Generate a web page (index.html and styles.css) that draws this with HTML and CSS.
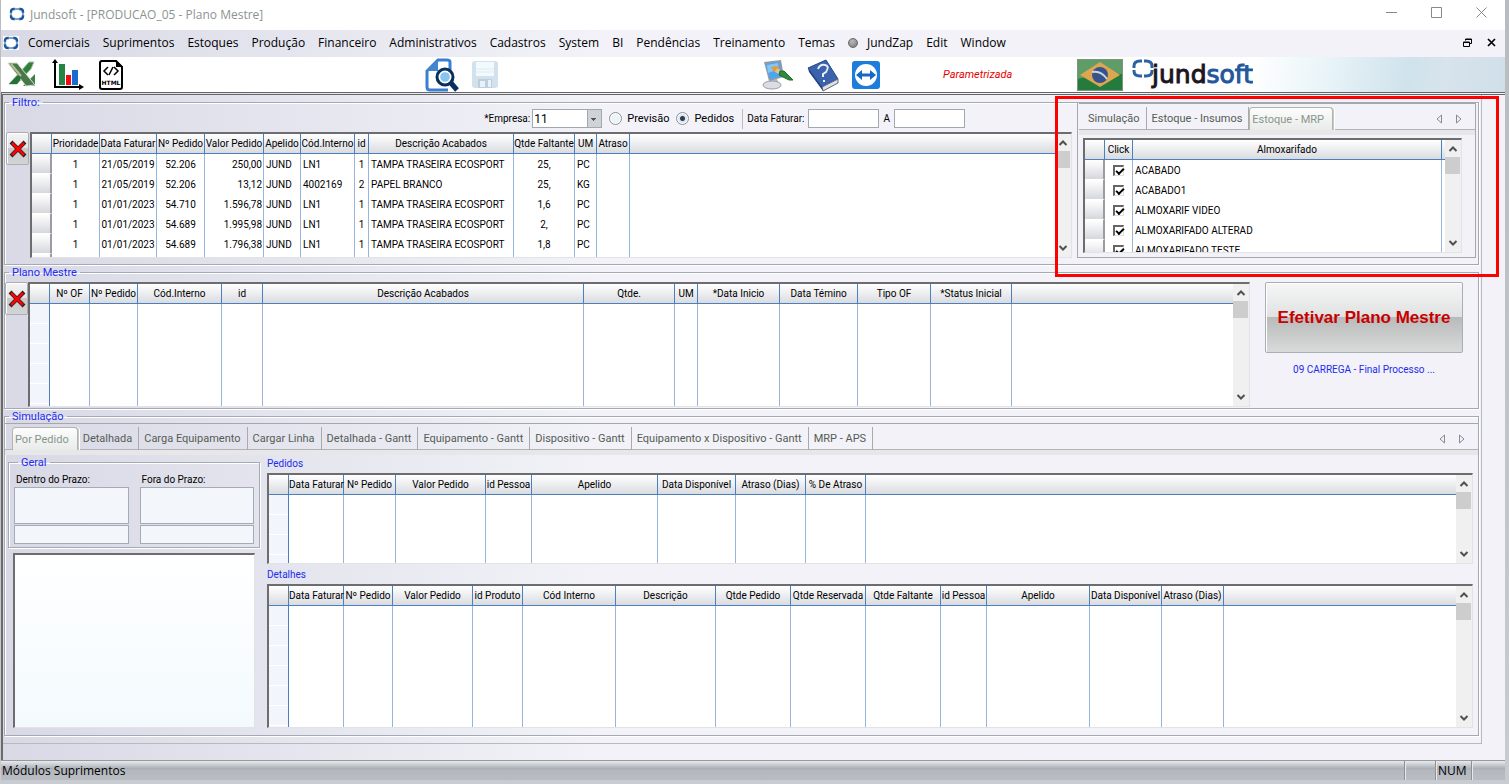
FILE: index.html
```html
<!DOCTYPE html>
<html lang="pt-BR">
<head>
<meta charset="utf-8">
<title>Jundsoft - [PRODUCAO_05 - Plano Mestre]</title>
<link rel="stylesheet" href="styles.css">
</head>
<body>
<svg class="defs" aria-hidden="true">
  <symbol id="ring" viewBox="0 0 16 14"><path d="M6 2H5Q2 2 2 5v1M10 2h1q3 0 3 3v1M2 8v1q0 3 3 3h1M14 8v1q0 3-3 3h-1" fill="none" stroke="#1d559c" stroke-width="2.4"/><path d="M5 2h6M5 12h6M2 5v4M14 5v4" stroke="#4d86c0" stroke-width="1.4"/></symbol>
  <symbol id="up" viewBox="0 0 10 8"><path d="M1.5 6 5 2.500 8.500 6" fill="none" stroke="#505050" stroke-width="2"/></symbol>
  <symbol id="down" viewBox="0 0 10 8"><path d="M1.500 2 5 5.500 8.500 2" fill="none" stroke="#505050" stroke-width="2"/></symbol>
  <symbol id="cross" viewBox="0 0 18 18"><path d="M2 2 16 16M16 2 2 16" stroke="#222" stroke-width="4"/><path d="M3 3 15 15M15 3 3 15" stroke="#f00" stroke-width="2.600"/></symbol>
  <symbol id="prev" viewBox="0 0 6 10"><path d="M5.500 1v8L1 5z" fill="none" stroke="#889"/></symbol>
  <symbol id="next" viewBox="0 0 6 10"><path d="M.5 1v8L5 5z" fill="none" stroke="#889"/></symbol>
</svg>
<div class="window">
  <header class="titlebar">
    <svg class="ring"><use href="#ring"/></svg>
    <h1>Jundsoft - [PRODUCAO_05 - Plano Mestre]</h1>
    <div class="caption-buttons">
      <button aria-label="Minimizar"><svg viewBox="0 0 11 11"><path d="M0 5.500h11" stroke="#888"/></svg></button>
      <button aria-label="Maximizar"><svg viewBox="0 0 11 11"><path d="M.5.5h10v10H.5z" fill="none" stroke="#888"/></svg></button>
      <button aria-label="Fechar"><svg viewBox="0 0 11 11"><path d="M.5.5l10 10M10.500.5l-10 10" stroke="#888"/></svg></button>
    </div>
  </header>
  <nav class="menubar">
    <svg class="ring"><use href="#ring"/></svg>
    <div class="menus">
      <button>Comerciais</button><button>Suprimentos</button><button>Estoques</button><button>Produção</button><button>Financeiro</button><button>Administrativos</button><button>Cadastros</button><button>System</button><button>BI</button><button>Pendências</button><button>Treinamento</button><button>Temas</button><button class="zap"><i></i>JundZap</button><button>Edit</button><button>Window</button>
    </div>
    <div class="mdi-buttons">
      <button aria-label="Restaurar"><svg viewBox="0 0 9 9"><path d="M2.500 2.500V1h6v4.500H7M.5 4h6v4.500h-6zM.5 4.500h6M2.500 1.500h6" fill="none" stroke="#000"/></svg></button>
      <button aria-label="Fechar janela"><svg viewBox="0 0 9 9"><path d="M1 1l7 7M8 1l-7 7" stroke="#000" stroke-width="1.700"/></svg></button>
    </div>
  </nav>
  <div class="toolbar">
    <div class="tools tools-export">
      <button aria-label="Exportar para Excel"><svg width="30" height="30" viewBox="0 0 30 30"><path d="M16 26 28 14v12z" fill="#3f8148"/><path d="M2 24 22 2h5l-3 7L10 24z" fill="#2f8138" stroke="#aebfae"/><path d="M1 3h9l18 22-9 1z" fill="#4a7749" stroke="#d6dfce"/><path d="m4 4 10 12" stroke="#b6bd97" stroke-width="2"/><path d="M2 24 10 24l4-6-3-3z" fill="#247135"/></svg></button>
      <button aria-label="Gráfico"><svg width="33" height="32" viewBox="0 0 33 32"><path fill="#258344" d="M8 5h6v21H8z"/><path fill="#f00a18" d="M15 16h5v10h-5z"/><path fill="#1b6bd0" d="M21 11h6v15h-6z"/><path d="M4 2v26h25" fill="none" stroke="#000" stroke-width="2"/><path d="m1 4 3-4 3 4zM28 25l5 3-5 3z"/></svg></button>
      <button aria-label="Exportar para HTML"><svg width="26" height="32" viewBox="0 0 26 32"><path d="M3 2h15l6 6v20q0 2-2 2H4q-2 0-2-2V4q0-2 2-2z" fill="#fff" stroke="#000" stroke-width="2"/><path d="M18 1v7h7z"/><path d="m10 8-4 4 4 4m6-8 4 4-4 4m-1-8-4 8" fill="none" stroke="#000" stroke-width="1.500"/><text x="13" y="26" text-anchor="middle" class="html-word">HTML</text></svg></button>
    </div>
    <div class="tools tools-file">
      <button aria-label="Visualizar"><svg width="34" height="34" viewBox="0 0 34 34"><path d="M25 12V4q0-2-3-2h-9L2 13v16q0 3 3 3h18" fill="none" stroke="#3b7fd0" stroke-width="3"/><path d="M13 1v12H2z" fill="#4287cf"/><path d="m26 25 6 7" stroke="#09305e" stroke-width="5"/><circle cx="20" cy="19" r="8" fill="#fff" stroke="#09305e" stroke-width="3"/><circle cx="20" cy="19" r="4.800" fill="#88c4ed"/></svg></button>
      <button aria-label="Salvar" disabled><svg width="28" height="30" viewBox="0 0 28 30"><rect x="1" y="1" width="26" height="27" rx="3" fill="#d3e1ec"/><path d="M5 2h18v14H5z" fill="#f3fafd"/><path d="M5 9h18M5 12h18" stroke="#dcebf4"/><path d="M7 19h14v9H7z" fill="#bccfdd"/><path d="M9 21h5v6H9zM17 20h3v7h-3z" fill="#e9f2f8"/></svg></button>
    </div>
    <div class="tools tools-help">
      <button aria-label="Personalizar"><svg width="32" height="32" viewBox="0 0 32 32"><path d="M8 20h7l2 5H7z" fill="#b9bcc6"/><ellipse cx="10" cy="26" rx="9" ry="4" fill="#dcdde4" stroke="#9a9ca4"/><path d="m2 3 17-2 3 17-15 4z" fill="#8d9bab"/><path d="m4 5 13-2 3 14-12 3z" fill="#4aa6ef"/><path d="m5 6 11-2 1 6-11 4z" fill="#86c6f7"/><path d="m9 8 7-1 2 4-6 2z" fill="#e59a3d"/><path d="m14 11 5 3" stroke="#d9c49a" stroke-width="4"/><path d="m18 12 4 0 9 9-4 0-10-5z" fill="#2f8a3e" stroke="#1f6a2c"/></svg></button>
      <button aria-label="Ajuda"><svg width="32" height="34" viewBox="0 0 32 34"><path d="m1 10 18-8 12 19-16 8z" fill="#3a63ab" stroke="#27478a"/><path d="m15 29 16-8v4l-15 8z" fill="#dfe1e6" stroke="#606878"/><path d="M1 10 15 29l1 4L2 14z" fill="#1e4288"/><path d="M11 11q2-5 7-4t1 7l-3 2v3m1 3v2" fill="none" stroke="#e8eefa" stroke-width="2"/></svg></button>
      <button aria-label="Acesso remoto"><svg width="28" height="28" viewBox="0 0 28 28"><rect width="28" height="28" rx="3" fill="#1d7ddb"/><circle cx="14" cy="14" r="11" fill="#fff"/><path d="M8 14h12" stroke="#1668c4" stroke-width="3"/><path d="m4 14 6-5v10zM24 14l-6-5v10z" fill="#1668c4"/></svg></button>
      <em>Parametrizada</em>
    </div>
    <div class="brand">
      <svg width="46" height="32" viewBox="0 0 46 32" role="img" aria-label="Brasil"><path fill="#247b3d" d="M0 0h46v32H0z"/><path fill="#5f9c68" d="M0 0h46v15Q20 15 0 20z"/><path fill="#dfa650" d="M3 16 23 3l20 13-20 12z"/><circle cx="23" cy="16" r="8" fill="#35548d"/><path d="M15 13q9-2 15 7" fill="none" stroke="#cbd5dd" stroke-width="2"/><path d="M.5.5h45v31H.5z" fill="none" stroke="#7b987e"/></svg>
      <svg class="brand-ring" viewBox="0 0 22 19"><path d="M10 2H8Q2 2 2 7v2M12 2h2q6 0 6 5v2M2 11v1q0 5 6 5h2M20 11v1q0 5-6 5h-2" fill="none" stroke="#2a62a5" stroke-width="3"/></svg>
      <strong>jund<span>soft</span></strong>
      <div class="sky"></div>
    </div>
  </div>

  <main class="workspace">
    <div class="annotation"></div>
    <div class="form">
      <fieldset class="filter">
        <legend>Filtro:</legend>
        <div class="filter-main">
          <div class="filter-form">
            <label class="small" for="empresa">*Empresa:</label>
            <select id="empresa"><option>11</option></select>
            <label class="choice"><input type="radio" name="tipo">Previsão</label>
            <label class="choice"><input type="radio" name="tipo" checked>Pedidos</label>
            <span class="divider"></span>
            <label class="small" for="de">Data Faturar:</label><input class="date" id="de" type="text">
            <label class="small" for="ate">A</label><input class="date" id="ate" type="text">
          </div>
          <div class="grid-row">
            <button class="delete" aria-label="Excluir pedido"><svg><use href="#cross"/></svg></button>
            <div class="grid">
              <table class="filled">
                <colgroup><col style="width:20px"><col style="width:48px"><col style="width:57px"><col style="width:48px"><col style="width:59px"><col style="width:37px"><col style="width:54px"><col style="width:14px"><col style="width:145px"><col style="width:61px"><col style="width:22px"><col style="width:33px"><col></colgroup>
                <thead><tr><th></th><th>Prioridade</th><th>Data Faturar</th><th>Nº Pedido</th><th>Valor Pedido</th><th>Apelido</th><th>Cód.Interno</th><th>id</th><th>Descrição Acabados</th><th>Qtde Faltante</th><th>UM</th><th>Atraso</th><th></th></tr></thead>
                <tbody>
                  <tr><td></td><td class="c">1</td><td class="c">21/05/2019</td><td class="c">52.206</td><td class="r">250,00</td><td>JUND</td><td>LN1</td><td class="c">1</td><td>TAMPA TRASEIRA ECOSPORT</td><td class="c">25,</td><td>PC</td><td></td><td></td></tr>
                  <tr><td></td><td class="c">1</td><td class="c">21/05/2019</td><td class="c">52.206</td><td class="r">13,12</td><td>JUND</td><td>4002169</td><td class="c">2</td><td>PAPEL BRANCO</td><td class="c">25,</td><td>KG</td><td></td><td></td></tr>
                  <tr><td></td><td class="c">1</td><td class="c">01/01/2023</td><td class="c">54.710</td><td class="r">1.596,78</td><td>JUND</td><td>LN1</td><td class="c">1</td><td>TAMPA TRASEIRA ECOSPORT</td><td class="c">1,6</td><td>PC</td><td></td><td></td></tr>
                  <tr><td></td><td class="c">1</td><td class="c">01/01/2023</td><td class="c">54.689</td><td class="r">1.995,98</td><td>JUND</td><td>LN1</td><td class="c">1</td><td>TAMPA TRASEIRA ECOSPORT</td><td class="c">2,</td><td>PC</td><td></td><td></td></tr>
                  <tr><td></td><td class="c">1</td><td class="c">01/01/2023</td><td class="c">54.689</td><td class="r">1.796,38</td><td>JUND</td><td>LN1</td><td class="c">1</td><td>TAMPA TRASEIRA ECOSPORT</td><td class="c">1,8</td><td>PC</td><td></td><td></td></tr>
                  <tr><td></td><td></td><td></td><td></td><td></td><td></td><td></td><td></td><td></td><td></td><td></td><td></td><td></td></tr>
                </tbody>
              </table>
              <div class="scroll"><svg><use href="#up"/></svg><i></i><svg><use href="#down"/></svg></div>
            </div>
          </div>
        </div>
        <section class="stock">
          <div class="tabs"><button>Simulação</button><button>Estoque - Insumos</button><button class="active">Estoque - MRP</button><span class="arrows"><svg><use href="#prev"/></svg><svg><use href="#next"/></svg></span></div>
          <div class="grid">
            <table class="filled">
              <colgroup><col style="width:20px"><col style="width:28px"><col><col style="width:3px"></colgroup>
              <thead><tr><th></th><th>Click</th><th>Almoxarifado</th><th></th></tr></thead>
              <tbody>
                <tr><td></td><td class="c"><input type="checkbox" aria-label="ACABADO" checked></td><td>ACABADO</td><td></td></tr>
                <tr><td></td><td class="c"><input type="checkbox" aria-label="ACABADO1" checked></td><td>ACABADO1</td><td></td></tr>
                <tr><td></td><td class="c"><input type="checkbox" aria-label="ALMOXARIF VIDEO" checked></td><td>ALMOXARIF VIDEO</td><td></td></tr>
                <tr><td></td><td class="c"><input type="checkbox" aria-label="ALMOXARIFADO ALTERAD" checked></td><td>ALMOXARIFADO ALTERAD</td><td></td></tr>
                <tr><td></td><td class="c"><input type="checkbox" aria-label="ALMOXARIFADO TESTE" checked></td><td>ALMOXARIFADO TESTE</td><td></td></tr>
              </tbody>
            </table>
            <div class="scroll"><svg><use href="#up"/></svg><i></i><svg><use href="#down"/></svg></div>
          </div>
        </section>
      </fieldset>

      <fieldset class="plan">
        <legend>Plano Mestre</legend>
        <button class="delete" aria-label="Excluir plano"><svg><use href="#cross"/></svg></button>
        <div class="grid">
          <table>
            <colgroup><col style="width:20px"><col style="width:40px"><col style="width:48px"><col style="width:84px"><col style="width:41px"><col style="width:321px"><col style="width:91px"><col style="width:23px"><col style="width:82px"><col style="width:78px"><col style="width:73px"><col style="width:81px"><col></colgroup>
            <thead><tr><th></th><th>Nº OF</th><th>Nº Pedido</th><th>Cód.Interno</th><th>id</th><th>Descrição Acabados</th><th>Qtde.</th><th>UM</th><th>*Data Inicio</th><th>Data Témino</th><th>Tipo OF</th><th>*Status Inicial</th><th></th></tr></thead>
            <tbody><tr><td></td><td></td><td></td><td></td><td></td><td></td><td></td><td></td><td></td><td></td><td></td><td></td><td></td></tr></tbody>
          </table>
          <div class="scroll"><svg><use href="#up"/></svg><i></i><svg><use href="#down"/></svg></div>
        </div>
        <div class="commit">
          <button>Efetivar Plano Mestre</button>
          <p>09 CARREGA - Final Processo ...</p>
        </div>
      </fieldset>

      <fieldset class="simulation">
        <legend>Simulação</legend>
        <div class="tabs"><button class="active">Por Pedido</button><button>Detalhada</button><button>Carga Equipamento</button><button>Cargar Linha</button><button>Detalhada - Gantt</button><button>Equipamento - Gantt</button><button>Dispositivo - Gantt</button><button>Equipamento x Dispositivo - Gantt</button><button>MRP - APS</button><span class="arrows"><svg><use href="#prev"/></svg><svg><use href="#next"/></svg></span></div>
        <div class="sim-body">
          <aside>
            <fieldset class="general">
              <legend>Geral</legend>
              <div><label for="dentro">Dentro do Prazo:</label><input id="dentro" class="tall" type="text"><input type="text" aria-label="Percentual dentro do prazo"></div>
              <div><label for="fora">Fora do Prazo:</label><input id="fora" class="tall" type="text"><input type="text" aria-label="Percentual fora do prazo"></div>
            </fieldset>
            <div class="chart"></div>
          </aside>
          <div class="sim-grids">
            <h2>Pedidos</h2>
            <div class="grid orders">
              <table>
                <colgroup><col style="width:20px"><col style="width:55px"><col style="width:52px"><col style="width:90px"><col style="width:46px"><col style="width:126px"><col style="width:78px"><col style="width:70px"><col style="width:60px"><col></colgroup>
                <thead><tr><th></th><th>Data Faturar</th><th>Nº Pedido</th><th>Valor Pedido</th><th>id Pessoa</th><th>Apelido</th><th>Data Disponível</th><th>Atraso (Dias)</th><th>% De Atraso</th><th></th></tr></thead>
                <tbody><tr><td></td><td></td><td></td><td></td><td></td><td></td><td></td><td></td><td></td><td></td></tr></tbody>
              </table>
              <div class="scroll"><svg><use href="#up"/></svg><i></i><svg><use href="#down"/></svg></div>
            </div>
            <h2>Detalhes</h2>
            <div class="grid details">
              <table>
                <colgroup><col style="width:20px"><col style="width:55px"><col style="width:49px"><col style="width:80px"><col style="width:50px"><col style="width:93px"><col style="width:100px"><col style="width:75px"><col style="width:75px"><col style="width:75px"><col style="width:46px"><col style="width:103px"><col style="width:72px"><col style="width:62px"><col></colgroup>
                <thead><tr><th></th><th>Data Faturar</th><th>Nº Pedido</th><th>Valor Pedido</th><th>id Produto</th><th>Cód Interno</th><th>Descrição</th><th>Qtde Pedido</th><th>Qtde Reservada</th><th>Qtde Faltante</th><th>id Pessoa</th><th>Apelido</th><th>Data Disponível</th><th>Atraso (Dias)</th><th></th></tr></thead>
                <tbody><tr><td></td><td></td><td></td><td></td><td></td><td></td><td></td><td></td><td></td><td></td><td></td><td></td><td></td><td></td><td></td></tr></tbody>
              </table>
              <div class="scroll"><svg><use href="#up"/></svg><i></i><svg><use href="#down"/></svg></div>
            </div>
          </div>
        </div>
      </fieldset>
    </div>
  </main>
  <footer class="status"><span class="module">Módulos Suprimentos</span><span class="cell"></span><span class="cell num">NUM</span><span class="cell last"></span></footer>
</div>
</body>
</html>
```
FILE: styles.css
```css
* { box-sizing: border-box; }
html { height: 100%; }
body {
  margin: 0;
  min-height: 100%;
  display: flex;
  padding: 0 4px 4px 1px;
  background: linear-gradient(#b8bcc0, #c8ccd0);
  font-family: Roboto, "Liberation Sans", Arial, sans-serif;
  font-size: 10px;
  color: #000;
}
button, input, select { font: inherit; color: inherit; }
button { margin: 0; padding: 0; border: 0; background: none; white-space: nowrap; }
.defs { position: absolute; width: 0; height: 0; }
.window { flex: 1; min-width: 0; display: flex; flex-direction: column; background: #f2f2f8; }
.ring { width: 16px; height: 14px; }

/* title and menus */
.titlebar { display: flex; align-items: center; gap: 5px; height: 30px; padding: 0 1px 2px 8px; background: #fff; font-family: "Open Sans", sans-serif; }
.titlebar h1 { margin: 0; flex: 1; font-size: 12px; font-weight: 400; color: #8c9490; }
.caption-buttons { display: flex; }
.caption-buttons button { width: 45px; height: 28px; }
.caption-buttons svg { width: 11px; height: 11px; }
.menubar { display: flex; align-items: center; height: 27px; padding: 0 0 2px 2px; background: linear-gradient(90deg, #d9d9e6, #f2f2f8 40%); font-family: "Open Sans", sans-serif; font-size: 12px; }
.menubar .ring { background: #fff; }
.menus { flex: 1; display: flex; gap: 13px; padding-left: 9px; }
.zap { display: flex; align-items: center; gap: 9px; }
.zap i { width: 10px; height: 10px; border-radius: 50%; background: radial-gradient(circle at 40% 30%, #bbb, #777); border: 1px solid #666; }
.mdi-buttons { display: flex; gap: 15px; padding-right: 9px; }
.mdi-buttons svg { display: block; width: 9px; height: 9px; }

/* toolbar */
.toolbar { display: grid; grid-template-columns: 424fr 336fr 316fr 428fr; height: 35px; background: #fff; }
.tools { display: flex; align-items: center; }
.tools svg, .brand svg { display: block; }
.tools-export { gap: 14px; padding-left: 6px; }
.tools-file { gap: 12px; }
.tools-help { gap: 13px; padding-left: 1px; }
.tools-help em { margin-left: 50px; color: #e80000; font-size: 11px; }
.html-word { font: bold 6px "DejaVu Sans", sans-serif; }
.brand { display: flex; align-items: center; }
.brand .brand-ring { width: 22px; height: 19px; margin: 0 0 12px 9px; }
.brand strong { margin-left: -2px; font: 500 25px/30px "DejaVu Sans", sans-serif; color: #1c1524; -webkit-text-stroke: 1px currentColor; }
.brand strong span { color: #24579d; }
.sky { flex: 1; align-self: stretch; background: linear-gradient(100deg, #fff 0%, #e8f4f8 30%, #dcebf2 45%, #cfe3ec 62%, #d8e3ec 75%, #cfdfe9); }

/* workspace */
.workspace { position: relative; flex: 1; display: flex; border: solid #6a6a6a; border-width: 2px 0 0 2px; border-top: 3px double #666; background: linear-gradient(90deg, #d9d9e6, #f2f2f8 40%); padding: 0 23px 16px 0; }
.form { flex: 1; min-width: 0; display: flex; flex-direction: column; gap: 1px; border: solid #b8b8be; border-width: 0 1px 1px 0; padding: 1px 2px 7px 1px; }
.annotation { position: absolute; z-index: 2; top: 1px; right: 6px; width: 444px; height: 181px; border: 3px solid #f00; pointer-events: none; }
fieldset { margin: 0; min-width: 0; padding: 0; border: 1px solid #a3aab4; box-shadow: 1px 1px #fff, inset 1px 1px #fff; }
legend { margin-left: 4px; padding: 0 3px; color: #1c2cf0; font-size: 11px; line-height: 13px; }
.filter { display: flex; gap: 5px; height: 169px; padding: 0 2px 1px 0; }
.filter-main { flex: 1; min-width: 0; }
.filter-form { display: flex; align-items: center; justify-content: flex-end; gap: 2px; height: 19px; margin-bottom: 4px; padding-right: 105px; }
.small { white-space: nowrap; }
select { appearance: none; width: 70px; height: 19px; margin: 0 5px 0 0; padding: 0 1px; border: 1px solid #a0a8b0; border-radius: 0; background: linear-gradient(#555, #555) 58px 8px / 5px 1px no-repeat, linear-gradient(#555, #555) 59px 9px / 3px 1px no-repeat, linear-gradient(#555, #555) 60px 10px / 1px 1px no-repeat, linear-gradient(90deg, #fff 54px, #a0a8b0 54px 55px, #cfd2d6 55px); font-size: 12px; }
.choice { display: flex; align-items: center; gap: 5px; margin-right: 5px; font-size: 11px; }
.choice input { appearance: none; width: 13px; height: 13px; margin: 0; border: 1px solid #8a939b; border-radius: 50%; background: #eef3f7; box-shadow: inset 0 0 0 1px #fff; }
.choice input:checked { background: radial-gradient(circle, #283c58 0 2px, #dfe5ea 3px); }
.divider { width: 1px; height: 20px; margin: 0 2px 0 1px; background: #b8bcc4; }
.date { width: 71px; height: 19px; margin: 0 2px; border: 1px solid #a0a8b0; background: #fff; }
.grid-row { display: flex; align-items: flex-start; gap: 1px; padding-left: 1px; }
.delete { display: grid; place-items: center; flex: none; width: 23px; height: 33px; border: 1px solid #a9aeb3; border-radius: 2px; background: linear-gradient(#f5f5f5, #e3e3e3 50%, #c7c8ca 50%, #d3d4d6); box-shadow: inset 1px 1px #fff; }
.delete svg { width: 18px; height: 18px; }

/* data grids */
.grid { flex: 1; min-width: 0; display: flex; height: 126px; overflow: hidden; border: 1px solid #e3e3e6; border-top: 2px solid #6d6d70; border-left: 2px solid #6d6d70; background: #fff; }
table { flex: 1; width: 0; height: 100%; table-layout: fixed; border-collapse: separate; border-spacing: 0; }
th { height: 20px; padding: 0; overflow: visible; white-space: nowrap; border-right: 1px solid #4a7fc0; border-bottom: 1px solid #4a7fc0; background: linear-gradient(#fff, #e9eaed 60%, #d9dbdf); font-weight: 400; text-align: center; }
td { height: 20px; padding: 0 2px; white-space: nowrap; border-right: 1px solid #9ab5dc; vertical-align: middle; }
th:last-child, td:last-child { border-right: 0; }
td:first-child { border-right-color: #4a7fc0; background: repeating-linear-gradient(#f2f6fc 0 19px, #fff 19px 20px); }
.filled { height: 20px; align-self: flex-start; }
.filled td:first-child { border-right: 2px solid #9a9ca2; border-bottom: 1px solid #fff; background: linear-gradient(#fff, #ececef 50%, #d5d7db); }
td.c { padding: 0; text-align: center; }
td.r { text-align: right; padding-right: 1px; }
.scroll { flex: none; width: 16px; display: flex; flex-direction: column; align-items: center; padding: 5px 1px 5px 0; background: #f0f0f0; }
.scroll svg { width: 10px; height: 8px; }
.scroll i { width: 15px; height: 17px; margin: 4px 0 auto; background: #cdcdcd; }

/* tabs */
.tabs { display: flex; height: 32px; padding-top: 3px; border-top: 1px solid #a5a7ac; border-bottom: 5px solid #e7e7ea; box-shadow: inset 0 -1px #b0b2b6; color: #555c55; font-size: 11px; }
.tabs button { padding: 0 6px 0 5px; border-right: 1px solid #a8aaae; }
.tabs .active { border: 1px solid #b0b5b0; border-bottom: 0; border-radius: 4px 4px 0 0; background: linear-gradient(#fdfdfd, #e9eaea); color: #88968a; padding: 0 8px 0 2px; box-shadow: 1px 0 #c5c8c8, 2px 0 #fff; }
.arrows { margin-left: auto; display: flex; align-items: center; gap: 14px; padding-right: 13px; }
.arrows svg { width: 6px; height: 10px; }
.simulation .tabs { padding-left: 7px; }
.stock { width: 399px; margin-top: -6px; padding-left: 1px; border: solid #a5a7ac; border-width: 0 1px 1px 1px; background: #f2f2f8; }
.stock .tabs { padding-left: 4px; }
.stock .grid { height: 115px; margin: 3px 13px 0 4px; }
.stock input { appearance: none; display: block; width: 11px; height: 11px; margin: 0 auto; border: 1px solid #e0e0e0; border-top: 2px solid #666; border-left: 2px solid #666; background: #fff; }
.stock input:checked::after { content: ""; display: block; width: 6px; height: 3px; margin: 1px; border: solid #000; border-width: 0 0 2px 2px; transform: rotate(-45deg); }

/* master plan */
.plan { display: flex; height: 143px; padding-top: 3px; }
.plan .grid { height: 125px; }
.commit { width: 228px; padding: 0 15px; display: flex; flex-direction: column; align-items: stretch; }
.commit button { height: 71px; border: 1px solid #a9aeb2; border-radius: 2px; background: linear-gradient(#f6f6f6, #e0e2e2 49%, #b9bbbb 50%, #d9dbdb); box-shadow: inset 1px 1px #fff; color: #c80000; font-family: "Liberation Sans", sans-serif; font-size: 17px; font-weight: 700; }
.commit p { margin: 11px 0 0; text-align: center; color: #1c2cf0; }

/* simulation */
.simulation { flex: 1; display: flex; flex-direction: column; }
.sim-body { flex: 1; display: flex; gap: 7px; padding: 1px 5px 7px 3px; }
aside { width: 252px; display: flex; flex-direction: column; gap: 5px; }
.general { display: flex; gap: 11px; height: 92px; padding: 4px 5px 0; }
.general div { flex: 1; min-width: 0; display: flex; flex-direction: column; gap: 1px; }
.general label { padding-left: 2px; line-height: 13px; }
.general input { width: 100%; height: 19px; border: 1px solid #a3abb5; background: #f3f7fc; }
.general .tall { height: 37px; }
.chart { flex: 1; margin: 0 5px 0 5px; border: 1px solid #e3e3e6; border-top: 2px solid #6d6d70; border-left: 2px solid #6d6d70; background: linear-gradient(#fff, #f3fafe); }
.sim-grids { flex: 1; min-width: 0; display: flex; flex-direction: column; }
h2 { margin: 0; height: 17px; font-size: 10px; font-weight: 400; line-height: 16px; color: #1c2cf0; }
.orders { flex: none; height: 91px; margin-bottom: 3px; }
.details { flex: 1; height: 145px; }

/* status bar */
.status { display: flex; height: 20px; border-top: 1px solid #999; background: linear-gradient(#e9eaec, #aab0b8 40%, #b5b8bd 50%, #b9bcc2); font-family: "Open Sans", sans-serif; font-size: 12px; line-height: 19px; }
.module { flex: 1; padding-left: 1px; }
.cell { width: 31px; border-left: 1px solid #8d9096; box-shadow: inset 1px 0 #e6e8ea; padding-left: 2px; }
.num { width: 36px; }
.last { width: 34px; }
```
